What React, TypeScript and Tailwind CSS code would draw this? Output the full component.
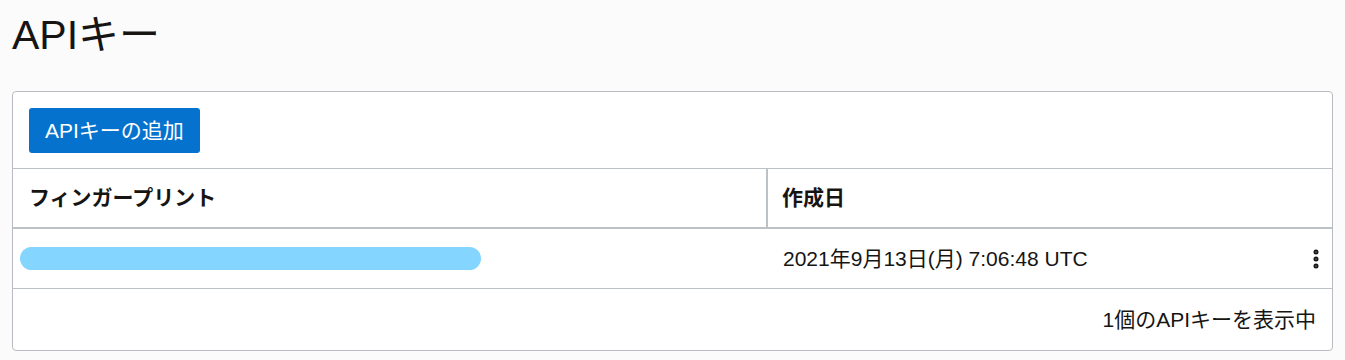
import { EllipsisVertical } from "lucide-react"

const font = { fontFamily: '"Liberation Sans", Arial, "Noto Sans CJK JP", sans-serif' }

function KeyRow(props: { created: string }) {
    return (
        <div className="flex h-[60px] items-center border-b border-[#bcc1c6]">
            <div className="flex w-[755px] shrink-0 items-center pl-[7px]">
                <div className="h-[23px] w-[461px] rounded-full bg-[#84d5ff]" />
            </div>
            <div className="flex flex-1 items-center justify-between pl-[15px] pr-[4px]">
                <span className="text-[21px] text-[#161513]">{props.created}</span>
                <EllipsisVertical className="h-6 w-6 text-[#161513]" strokeWidth={3} />
            </div>
        </div>
    )
}

export default function App() {
    return (
        <div className="min-h-[360px] bg-[#fbfbfb] px-3 pt-[7px]" style={font}>
            <h1 className="text-[41px] leading-[56px] text-[#161513]">APIキー</h1>

            <div className="mt-[28px] rounded-[4px] border border-[#b8bcc1] bg-white">
                <div className="px-4 pb-[15px] pt-4">
                    <button className="h-[45px] rounded-[3px] bg-[#0572ce] px-[16px] text-[21px] text-white">
                        APIキーの追加
                    </button>
                </div>

                <div className="flex h-[61px] border-b-2 border-t border-[#bcc1c6]">
                    <div className="flex w-[755px] shrink-0 items-center border-r-2 border-[#bcc1c6] pl-4 text-[21px] font-bold text-[#161513]">
                        フィンガープリント
                    </div>
                    <div className="flex flex-1 items-center pl-[14px] text-[21px] font-bold text-[#161513]">
                        作成日
                    </div>
                </div>

                <KeyRow created="2021年9月13日(月) 7:06:48 UTC" />

                <div className="flex h-[61px] items-center justify-end pr-4 text-[21px] text-[#161513]">
                    1個のAPIキーを表示中
                </div>
            </div>
        </div>
    )
}
